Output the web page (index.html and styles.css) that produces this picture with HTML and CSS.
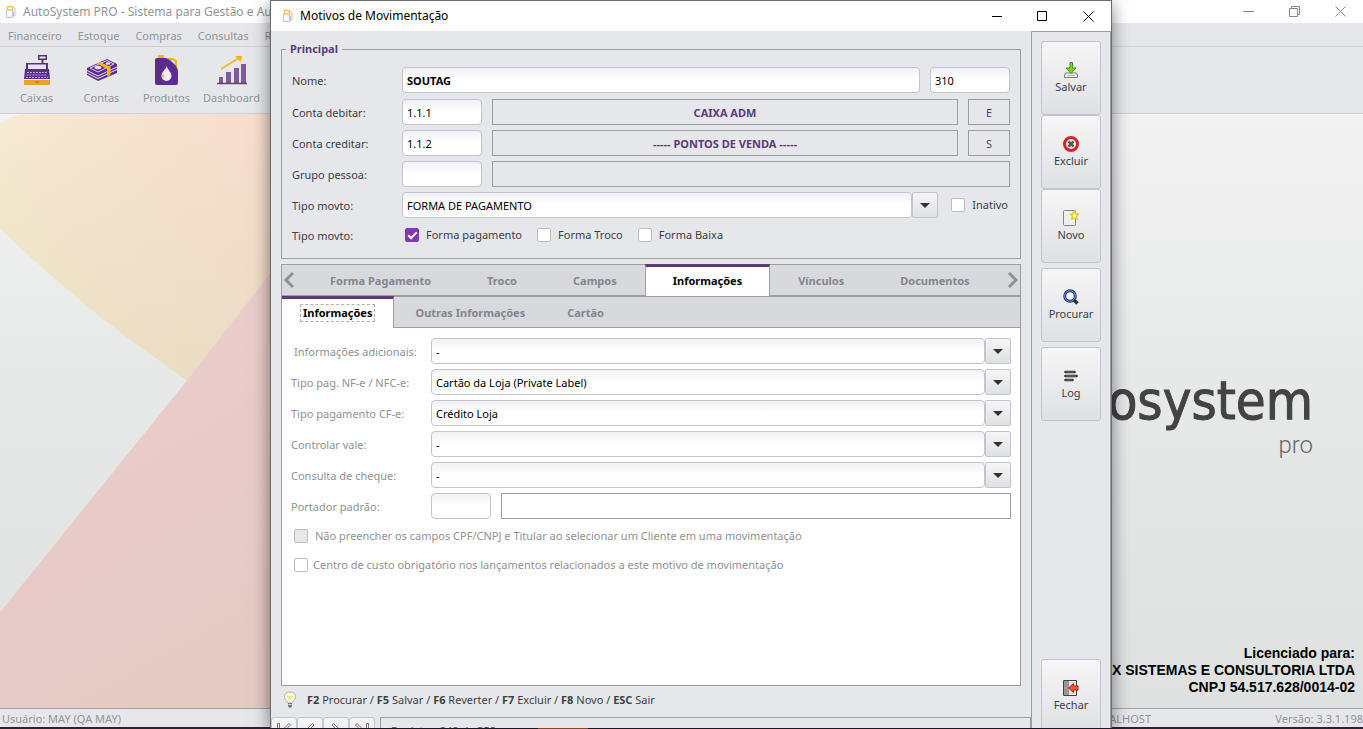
FILE: index.html
```html
<!DOCTYPE html>
<html lang="pt-BR">
<head>
    <meta charset="UTF-8">
    <meta name="viewport" content="width=device-width, initial-scale=1.0">
    <title>AutoSystem PRO - Motivos de Movimentação</title>
    <link rel="stylesheet" href="styles.css">
</head>
<body>
<div class="app">
    <header class="titlebar">
        <svg class="app-icon" width="12" height="14" viewBox="0 0 12 14" fill="none">
            <path d="M1.500 5V12.500H7.500V5" stroke="#c9bbdb"/>
            <path d="M2.500 5V1.500H7.500V5Z" stroke="#f5c35c" stroke-width="1.500"/>
            <path d="M8 2l2 1.500V11H8.500V7" stroke="#c9bbdb"/>
        </svg>
        <span>AutoSystem PRO - Sistema para Gestão e Automação</span>
        <div class="window-controls">
            <button aria-label="Minimizar"><svg width="11" height="11" viewBox="0 0 11 11"><path d="M0 5.500H11" stroke="#888"/></svg></button>
            <button aria-label="Restaurar"><svg width="11" height="11" viewBox="0 0 11 11" fill="none" stroke="#888"><path d="M.5 2.500H8.500V10.500H.5ZM2.500 2.500V.5H10.500V8.500H8.500"/></svg></button>
            <button aria-label="Fechar janela"><svg width="11" height="11" viewBox="0 0 11 11"><path d="M.5.5l10 10M10.500.5l-10 10" stroke="#888"/></svg></button>
        </div>
    </header>
    <nav class="menu">
        <a href="#">Financeiro</a>
        <a href="#">Estoque</a>
        <a href="#">Compras</a>
        <a href="#">Consultas</a>
        <a href="#">Relatórios</a>
    </nav>
    <div class="toolbar">
        <button>
            <svg width="32" height="32" viewBox="0 0 32 32">
                <path d="M17 1h9v5h-3.500v3h-2V6H17z" fill="#5c2d91"/>
                <path d="M18.500 2.500h6v2h-6z" fill="#e6e7eb"/>
                <path d="M5 9h22v6h1l1 10H3l1-10h1z" fill="#5c2d91"/>
                <path d="M7 10.500h18V15H7z" fill="#e6e7eb"/>
                <path d="M6 18.500h20M5.500 21h21M5 23.500h22" stroke="#b9a8cf" stroke-dasharray="2 1"/>
                <path d="M3 26h26v5H3z" fill="#e2a62a"/>
                <path d="M14 28h4" stroke="#9b7420"/>
            </svg>
            <span>Caixas</span>
        </button>
        <button>
            <svg width="32" height="32" viewBox="0 0 32 32">
                <path d="M1 14L21 5l10 5v9L12 27 1 21z" fill="#5c2d91"/>
                <path d="M1 16.500l11 5.500 19-9M1 19l11 5.500 19-9" stroke="#e6e7eb" fill="none"/>
                <path d="M4 14l17-7.500 7 3.500-16 8z" fill="none" stroke="#d8cfe4"/>
                <ellipse cx="12" cy="13.500" rx="3.500" ry="1.800" fill="#e6e7eb"/>
                <ellipse cx="22" cy="9.500" rx="2.500" ry="1.300" fill="#e6e7eb"/>
                <path d="M11 9.500l3.500-1.500 10 5v8l-3.500 1.500V15z" fill="#fbb316"/>
            </svg>
            <span>Contas</span>
        </button>
        <button>
            <svg width="32" height="32" viewBox="0 0 32 32">
                <path d="M7 1h6v3H7z" fill="#fbb316"/>
                <path d="M16 5h6l3 2v7" fill="none" stroke="#fbb316" stroke-width="2"/>
                <path d="M6 4h9c6 3 12 8 12 14v11q0 2-2 2H6q-2 0-2-2V6q0-2 2-2z" fill="#5c2d91"/>
                <path d="M15.500 12c2 5 5 6 5 10a5 5 0 0 1-10 0c0-4 4-6 5-10z" fill="#f1edf5"/>
                <path d="M10.500 21q1 3 3 3l-1-4z" fill="#fbb316"/>
            </svg>
            <span>Produtos</span>
        </button>
        <button>
            <svg width="32" height="32" viewBox="0 0 32 32">
                <path d="M3 23h4v6H3zM10 18h5v11h-5zM18 14h5v15h-5zM25 10h5v19h-5z" fill="#7f5a9b"/>
                <path d="M1 29.500h30" stroke="#5c4270" stroke-width="1.500"/>
                <path d="M5 15l18-11" stroke="#fbb316" stroke-width="1.500"/>
                <path d="M19 2h7l-1 6z" fill="#fbb316"/>
            </svg>
            <span>Dashboard</span>
        </button>
        <button><span>Relatórios</span></button>
    </div>
    <main class="workspace">
        <svg class="backdrop" viewBox="0 0 1363 595" preserveAspectRatio="none" aria-hidden="true">
            <defs>
                <linearGradient id="yellow" x1="0" y1="0" x2="1" y2="0">
                    <stop offset="0" stop-color="#f7ead2"/>
                    <stop offset=".64" stop-color="#f7ddcf"/>
                </linearGradient>
                <linearGradient id="shade" x1="0" y1="0" x2="0" y2="1">
                    <stop offset="0" stop-color="#ded9b8" stop-opacity="0"/>
                    <stop offset="1" stop-color="#ded9b8" stop-opacity=".6"/>
                </linearGradient>
                <linearGradient id="red" x1="0" y1="0" x2=".4" y2="1">
                    <stop offset="0" stop-color="#f0cfcf"/>
                    <stop offset="1" stop-color="#e4c9c5"/>
                </linearGradient>
            </defs>
            <path d="M0 10Q8 3 24 0H420V300L187 267Q140 234 100 203 72 180 50 161 24 138 0 115Z" fill="url(#yellow)"/>
            <path d="M0 10Q8 3 24 0H420V300L187 267Q140 234 100 203 72 180 50 161 24 138 0 115Z" fill="url(#shade)"/>
            <path d="M0 499L187 267 270 160 394 0H420V595H0Z" fill="url(#red)"/>
        </svg>
        <div class="brand">
            <span class="brand-name">autosystem</span>
            <span class="brand-edition">pro</span>
        </div>
        <div class="license">
            <p>Licenciado para:</p>
            <p>LINX SISTEMAS E CONSULTORIA LTDA</p>
            <p>CNPJ 54.517.628/0014-02</p>
        </div>
    </main>
    <footer class="statusbar">
        <span class="status-user">Usuário: MAY (QA MAY)</span>
        <span class="status-host">LOCALHOST</span>
        <span class="status-version">Versão: 3.3.1.198</span>
    </footer>
    <div class="taskbar"><i></i></div>
</div>

<section class="dialog" role="dialog" aria-label="Motivos de Movimentação">
    <header class="titlebar">
        <svg class="app-icon" width="12" height="14" viewBox="0 0 12 14" fill="none">
            <path d="M1.500 5V12.500H7.500V5" stroke="#c9bbdb"/>
            <path d="M2.500 5V1.500H7.500V5Z" stroke="#f5c35c" stroke-width="1.500"/>
            <path d="M8 2l2 1.500V11H8.500V7" stroke="#c9bbdb"/>
        </svg>
        <span>Motivos de Movimentação</span>
        <div class="window-controls">
            <button aria-label="Minimizar"><svg width="11" height="11" viewBox="0 0 11 11"><path d="M1 5.500H11" stroke="#000"/></svg></button>
            <button aria-label="Maximizar"><svg width="11" height="11" viewBox="0 0 11 11"><path d="M.5.5H9.500V9.500H.5Z" fill="none" stroke="#000"/></svg></button>
            <button aria-label="Fechar janela"><svg width="11" height="11" viewBox="0 0 11 11"><path d="M.5.5l10 10M10.500.5l-10 10" stroke="#000"/></svg></button>
        </div>
    </header>
    <div class="dialog-body">
        <div class="content">
            <div class="panels">
                <fieldset class="principal">
                    <legend>Principal</legend>
                    <div class="row first">
                        <label for="nome">Nome:</label>
                        <input class="grow strong" type="text" id="nome" value="SOUTAG">
                        <input class="code" type="text" aria-label="Código" value="310">
                    </div>
                    <div class="row">
                        <label for="debitar">Conta debitar:</label>
                        <input class="code" type="text" id="debitar" value="1.1.1">
                        <output class="display grow">CAIXA ADM</output>
                        <output class="display kind">E</output>
                    </div>
                    <div class="row">
                        <label for="creditar">Conta creditar:</label>
                        <input class="code" type="text" id="creditar" value="1.1.2">
                        <output class="display grow">----- PONTOS DE VENDA -----</output>
                        <output class="display kind">S</output>
                    </div>
                    <div class="row">
                        <label for="grupo">Grupo pessoa:</label>
                        <input class="code" type="text" id="grupo">
                        <output class="display grow"></output>
                    </div>
                    <div class="row">
                        <label for="tipo">Tipo movto:</label>
                        <div class="combo"><select id="tipo"><option>FORMA DE PAGAMENTO</option></select></div>
                        <label class="check"><input type="checkbox">Inativo</label>
                    </div>
                    <div class="row checks">
                        <span class="caption">Tipo movto:</span>
                        <label class="check"><input type="checkbox" checked>Forma pagamento</label>
                        <label class="check"><input type="checkbox">Forma Troco</label>
                        <label class="check"><input type="checkbox">Forma Baixa</label>
                    </div>
                </fieldset>

                <div class="notebook">
                    <div class="tabs" role="tablist">
                        <button class="scroll" aria-label="Abas anteriores"><svg width="12" height="18" viewBox="0 0 12 18"><path d="M10 2L3 9l7 7" fill="none" stroke="#8f9293" stroke-width="3"/></svg></button>
                        <button role="tab">Forma Pagamento</button>
                        <button role="tab">Troco</button>
                        <button role="tab">Campos</button>
                        <button role="tab" class="active">Informações</button>
                        <button role="tab">Vínculos</button>
                        <button role="tab">Documentos</button>
                        <button class="scroll next" aria-label="Próximas abas"><svg width="12" height="18" viewBox="0 0 12 18"><path d="M2 2l7 7-7 7" fill="none" stroke="#8f9293" stroke-width="3"/></svg></button>
                    </div>
                    <div class="tabs subtabs" role="tablist">
                        <button role="tab" class="active"><span class="focus">Informações</span></button>
                        <button role="tab">Outras Informações</button>
                        <button role="tab">Cartão</button>
                    </div>
                    <div class="page">
                        <div class="row">
                            <label class="indent" for="adicionais">Informações adicionais:</label>
                            <div class="combo"><select id="adicionais"><option>-</option></select></div>
                        </div>
                        <div class="row">
                            <label for="nfe">Tipo pag. NF-e / NFC-e:</label>
                            <div class="combo"><select id="nfe"><option>Cartão da Loja (Private Label)</option></select></div>
                        </div>
                        <div class="row">
                            <label for="cfe">Tipo pagamento CF-e:</label>
                            <div class="combo"><select id="cfe"><option>Crédito Loja</option></select></div>
                        </div>
                        <div class="row">
                            <label for="vale">Controlar vale:</label>
                            <div class="combo"><select id="vale"><option>-</option></select></div>
                        </div>
                        <div class="row">
                            <label for="cheque">Consulta de cheque:</label>
                            <div class="combo"><select id="cheque"><option>-</option></select></div>
                        </div>
                        <div class="row">
                            <label for="portador">Portador padrão:</label>
                            <input class="short" type="text" id="portador">
                            <output class="display grow"></output>
                        </div>
                        <label class="check line"><input type="checkbox" disabled>Não preencher os campos CPF/CNPJ e Titular ao selecionar um Cliente em uma movimentação</label>
                        <label class="check line tight"><input type="checkbox">Centro de custo obrigatório nos lançamentos relacionados a este motivo de movimentação</label>
                    </div>
                </div>
            </div>

            <div class="hints">
                <svg width="14" height="18" viewBox="0 0 14 18">
                    <path d="M7 1C3 1 1 3.500 1.500 6.500 2 9 4.500 10 4.500 12h5c0-2 2.500-3 3-5.500C13 3.500 11 1 7 1z" fill="#f8f6dc" stroke="#b4b4a8"/>
                    <path d="M3.500 5h7L8.500 8h-3z" fill="#f1e88a"/>
                    <path d="M5 12h4v3.500L7 17l-2-1.500z" fill="#777"/>
                    <path d="M5 13.500h4" stroke="#ccc"/>
                </svg>
                <span><b>F2</b> Procurar / <b>F5</b> Salvar / <b>F6</b> Reverter / <b>F7</b> Excluir / <b>F8</b> Novo / <b>ESC</b> Sair</span>
            </div>

            <div class="pager">
                <button aria-label="Primeiro"><svg width="16" height="16" viewBox="0 0 16 16" fill="none" stroke="#777"><path d="M1.500 1.500h2v13h-2zM13 1.500L6.500 8l6.500 6.500 1.500-1.500-5-5 5-5z"/></svg></button>
                <button aria-label="Anterior"><svg width="16" height="16" viewBox="0 0 16 16" fill="none" stroke="#777"><path d="M10.500 1.500L4 8l6.500 6.500L12 13 7 8l5-5z"/></svg></button>
                <button aria-label="Próximo"><svg width="16" height="16" viewBox="0 0 16 16" fill="none" stroke="#777"><path d="M5.500 1.500L12 8l-6.500 6.500L4 13l5-5-5-5z"/></svg></button>
                <button aria-label="Último"><svg width="16" height="16" viewBox="0 0 16 16" fill="none" stroke="#777"><path d="M3 1.500L9.500 8 3 14.500 1.500 13l5-5-5-5zM12.500 1.500h2v13h-2z"/></svg></button>
                <div class="record">Registro: 248 de 352</div>
            </div>
        </div>

        <aside class="actions">
            <button>
                <svg width="16" height="16" viewBox="0 0 16 16">
                    <path d="M2.500 11h11l1 2v2.500h-13V13z" fill="#f4f4f2" stroke="#777"/>
                    <path d="M4 13.500h8" stroke="#aaa"/>
                    <path d="M7 .5h2.500V6H13l-5 5.500L3 6h4z" fill="#7bd21f" stroke="#3f9410"/>
                </svg>
                Salvar
            </button>
            <button>
                <svg width="16" height="16" viewBox="0 0 16 16">
                    <circle cx="8" cy="8" r="6.500" fill="#f5f5f5" stroke="#dd2025" stroke-width="3"/>
                    <path d="M5.500 5.500l5 5M10.500 5.500l-5 5" stroke="#555" stroke-width="2.500"/>
                </svg>
                Excluir
            </button>
            <button>
                <svg width="16" height="16" viewBox="0 0 16 16">
                    <path d="M.5 1.500q0-1 1-1h10q1 0 1 1v13q0 1-1 1h-10q-1 0-1-1z" fill="#efefed" stroke="#858780"/>
                    <path d="M11.500 1.500l1.300 2.200 2.700.5-1.800 2 .3 2.800-2.500-1-2.500 1 .3-2.800-1.800-2 2.700-.5z" fill="#fffbd0" stroke="#e8cb1c" stroke-width="1.500"/>
                </svg>
                Novo
            </button>
            <button class="spaced">
                <svg width="16" height="16" viewBox="0 0 16 16">
                    <path d="M10.500 10.500l4 4" stroke="#333" stroke-width="3.500"/>
                    <circle cx="7" cy="7" r="5.300" fill="#f2f3f6" stroke="#26397f" stroke-width="3"/>
                    <circle cx="7" cy="7" r="5.300" fill="none" stroke="#6d8bd4"/>
                </svg>
                Procurar
            </button>
            <button class="spaced">
                <svg width="16" height="16" viewBox="0 0 16 16" stroke="#222" stroke-width="2.500" stroke-linecap="round">
                    <path d="M2.500 4h9M2.500 8h11M2.500 12h7"/>
                    <path d="M3 4h8M3 8h10M3 12h6" stroke="#999" stroke-width=".8"/>
                </svg>
                Log
            </button>
            <button class="close">
                <svg width="16" height="16" viewBox="0 0 16 16">
                    <path d="M.5.5h13v15H.5z" fill="#e4e4e2" stroke="#444"/>
                    <path d="M1 1h5v14H1z" fill="#999"/>
                    <path d="M5.500 8l5-4.500V6H15v4h-4.500v2.500z" fill="#f0583a" stroke="#b81c12"/>
                </svg>
                Fechar
            </button>
        </aside>
    </div>
</section>
</body>
</html>
```
FILE: styles.css
```css
*, *::before, *::after {
    box-sizing: border-box;
}
body {
    margin: 0;
    height: 100vh;
    overflow: hidden;
    font-family: "Noto Sans", "Open Sans", sans-serif;
    font-size: 11px;
    line-height: 16px;
    color: #3c3f42;
}
button, input, select {
    font: inherit;
    color: inherit;
    margin: 0;
}
button {
    padding: 0;
    border: 0;
    background: none;
}

/* Main window */
.app {
    display: flex;
    flex-direction: column;
    height: 100vh;
    color: #929498;
}
.titlebar {
    display: flex;
    align-items: center;
    height: 23px;
    padding-left: 5px;
    background: #fff;
    font-size: 12px;
}
.app-icon {
    margin-right: 6px;
}
.window-controls {
    display: flex;
    margin-left: auto;
}
.window-controls button {
    display: flex;
    align-items: center;
    justify-content: center;
    width: 46px;
    height: 20px;
}
.menu {
    display: flex;
    gap: 16px;
    height: 24px;
    padding: 5px 8px 0;
    background: #e6e7eb;
    border-bottom: 1px solid #cfd1d6;
}
.menu a {
    color: inherit;
    text-decoration: none;
}
.toolbar {
    display: flex;
    height: 67px;
    padding: 7px 0 0 4px;
    background: #e6e7eb;
    border-bottom: 1px solid #cfd1d6;
}
.toolbar button {
    display: flex;
    flex-direction: column;
    align-items: center;
    justify-content: space-between;
    width: 65px;
    height: 52px;
}
.workspace {
    position: relative;
    flex: 1;
    background: linear-gradient(#f2f2f2, #e8eae9 40%, #dfe1e0);
}
.backdrop {
    position: absolute;
    inset: 0;
    width: 100%;
    height: 100%;
}
.brand {
    position: absolute;
    right: 50px;
    top: 255px;
    display: flex;
    flex-direction: column;
    align-items: flex-end;
}
.brand-name {
    font-family: "DejaVu Sans Condensed", "DejaVu Sans", sans-serif;
    font-size: 54px;
    line-height: 64px;
    color: #434345;
    -webkit-text-stroke: 1px #434345;
}
.brand-edition {
    font-family: Roboto, sans-serif;
    font-size: 24px;
    font-weight: 300;
    line-height: 24px;
    color: #66676a;
}
.license {
    position: absolute;
    right: 8px;
    bottom: 12px;
    font: bold 14px/17px "Liberation Sans", Arial, sans-serif;
    color: #000;
    text-align: right;
}
.license p {
    margin: 0;
}
.statusbar {
    display: flex;
    height: 19px;
    padding-left: 2px;
    background: #e6e7eb;
    border-top: 1px solid #a0a2a4;
    line-height: 20px;
}
.status-host {
    margin-left: auto;
}
.status-version {
    width: 212px;
    text-align: right;
}
.taskbar {
    height: 2px;
    background: #2b2130;
}
.taskbar i {
    display: block;
    width: 50px;
    height: 2px;
    margin-left: 538px;
    background: #c8692c;
}

/* Dialog */
.dialog {
    position: absolute;
    top: 0;
    bottom: 1px;
    left: 270px;
    right: 251px;
    display: flex;
    flex-direction: column;
    overflow: hidden;
    background: #e6e7eb;
    border: 1px solid #6e6b6c;
    border-bottom: 0;
    box-shadow: 0 4px 16px rgba(0, 0, 0, .5);
}
.dialog .titlebar {
    flex: none;
    height: 30px;
    padding-left: 11px;
    color: #000;
}
.dialog-body {
    display: flex;
    flex: 1;
    min-height: 0;
}
.content {
    display: flex;
    flex: 1;
    flex-direction: column;
    min-width: 0;
}
.panels {
    display: flex;
    flex: 1;
    flex-direction: column;
    gap: 5px;
    padding: 10px 10px 0;
}
.principal {
    min-width: 0;
    margin: 0;
    padding: 10px 10px 6px;
    border: 1px solid #9c9ea0;
}
legend {
    margin-left: -6px;
    padding: 0 4px;
    color: #5d3a7e;
    font-weight: bold;
}
.row {
    display: flex;
    align-items: center;
    gap: 10px;
    height: 26px;
    margin-bottom: 5px;
}
.row.first {
    margin-bottom: 6px;
}
.row > label:first-child, .caption {
    flex: none;
    width: 100px;
    padding-top: 2px;
}
.grow {
    flex: 1;
    min-width: 0;
}
input[type="text"] {
    height: 26px;
    padding: 0 4px;
    border: 1px solid #c2c5d0;
    border-radius: 4px;
    background: linear-gradient(#f1f1f4, #fff 50%);
    color: #000;
}
input.code {
    width: 80px;
}
input.short {
    width: 60px;
}
input.strong {
    font-weight: bold;
}
.display {
    height: 26px;
    border: 1px solid #9c9ea0;
    color: #5d3a7e;
    font-weight: bold;
    line-height: 25px;
    text-align: center;
}
.display.kind {
    width: 42px;
    font-weight: normal;
}
.combo {
    position: relative;
    display: flex;
    flex: 1;
}
.combo select {
    flex: 1;
    height: 26px;
    padding: 1px 4px 0;
    appearance: none;
    border: 1px solid #c2c5d0;
    border-radius: 4px;
    background: linear-gradient(#f1f1f4, #fff 50%);
    color: #000;
}
.combo::after {
    content: "";
    width: 26px;
    height: 26px;
    border: 1px solid #c2c5d0;
    border-radius: 2px;
    background: linear-gradient(#f6f6f6, #dfe0e3);
}
.combo::before {
    content: "";
    position: absolute;
    right: 8px;
    top: 11px;
    border: 5px solid transparent;
    border-top-color: #2e3436;
    border-bottom: 0;
}
.check {
    display: flex;
    align-items: center;
    gap: 7px;
}
input[type="checkbox"] {
    display: grid;
    place-content: center;
    width: 14px;
    height: 14px;
    appearance: none;
    border: 1px solid #bdbdbb;
    border-radius: 2px;
    background: #fff;
}
input[type="checkbox"]:checked {
    border-color: #7d3bb0;
    background: #8238b6;
}
input[type="checkbox"]:checked::before {
    content: "";
    width: 9px;
    height: 5px;
    border: solid #fff;
    border-width: 0 0 2px 2px;
    transform: translateY(-1px) rotate(-45deg);
}
input[type="checkbox"]:disabled {
    background: #e6e7eb;
}
.row > .combo + .check {
    margin: 0 2px 0 3px;
}
.checks {
    gap: 15px;
    height: 24px;
}
.checks .caption {
    width: 98px;
}

/* Notebook */
.notebook {
    display: flex;
    flex: 1;
    flex-direction: column;
    border: 1px solid #9c9ea0;
    background: #fff;
}
.tabs {
    display: flex;
    height: 32px;
    background: #d8d9dd;
    color: #83868d;
    font-weight: bold;
}
.tabs button {
    padding: 2px 28px 0;
    border-bottom: 2px solid #9c9ea0;
}
.tabs .active {
    margin-top: -1px;
    padding: 0 27px 2px;
    border: 1px solid #9c9ea0;
    border-top: 3px solid #5d3a7e;
    background: #fff;
    color: #000;
}
.tabs .scroll {
    display: flex;
    align-items: center;
    width: 20px;
    padding: 0 1px;
}
.tabs .next {
    flex: 1;
    justify-content: flex-end;
}
.subtabs {
    height: 31px;
    border-bottom: 1px solid #9c9ea0;
}
.subtabs button {
    padding: 2px 21px 0;
    border-bottom: 0;
}
.subtabs .active {
    margin-bottom: -1px;
    padding: 0 18px 2px;
    border-left: 0;
    border-bottom: 0;
}
.focus {
    display: block;
    padding: 0 2px;
    border: 1px dashed #b0b0b0;
}
.page {
    padding: 10px 9px;
    color: #8f9195;
}
.page .row > label:first-child {
    width: 130px;
}
.page .row > .indent {
    padding-left: 3px;
}
.line {
    height: 24px;
    margin: 0 3px 5px;
}
.tight {
    gap: 5px;
}

/* Footer of the dialog */
.hints {
    display: flex;
    align-items: center;
    gap: 10px;
    height: 31px;
    padding: 0 0 3px 12px;
}
.pager {
    display: flex;
    height: 11px;
}
.pager button {
    width: 26px;
    height: 26px;
    padding-top: 4px;
    border: 1px solid #c2c5d0;
    border-radius: 3px;
    background: linear-gradient(#f6f6f6, #e6e7eb);
}
.record {
    flex: 1;
    height: 26px;
    margin-left: 5px;
    padding-left: 10px;
    border: 1px solid #9c9ea0;
    color: #5d3a7e;
    line-height: 26px;
}
.actions {
    display: flex;
    flex-direction: column;
    width: 80px;
    padding: 9px 9px 0;
    border: 1px solid #9c9ea0;
    border-bottom: 0;
}
.actions button {
    display: flex;
    flex: none;
    flex-direction: column;
    align-items: center;
    justify-content: center;
    gap: 1px;
    height: 74px;
    border: 1px solid #c2c5d0;
    border-radius: 3px;
    background: linear-gradient(#f6f6f6, #dfe0e3);
}
.actions .spaced {
    margin-top: 5px;
}
.actions .close {
    margin-top: auto;
    margin-bottom: -5px;
}
```
